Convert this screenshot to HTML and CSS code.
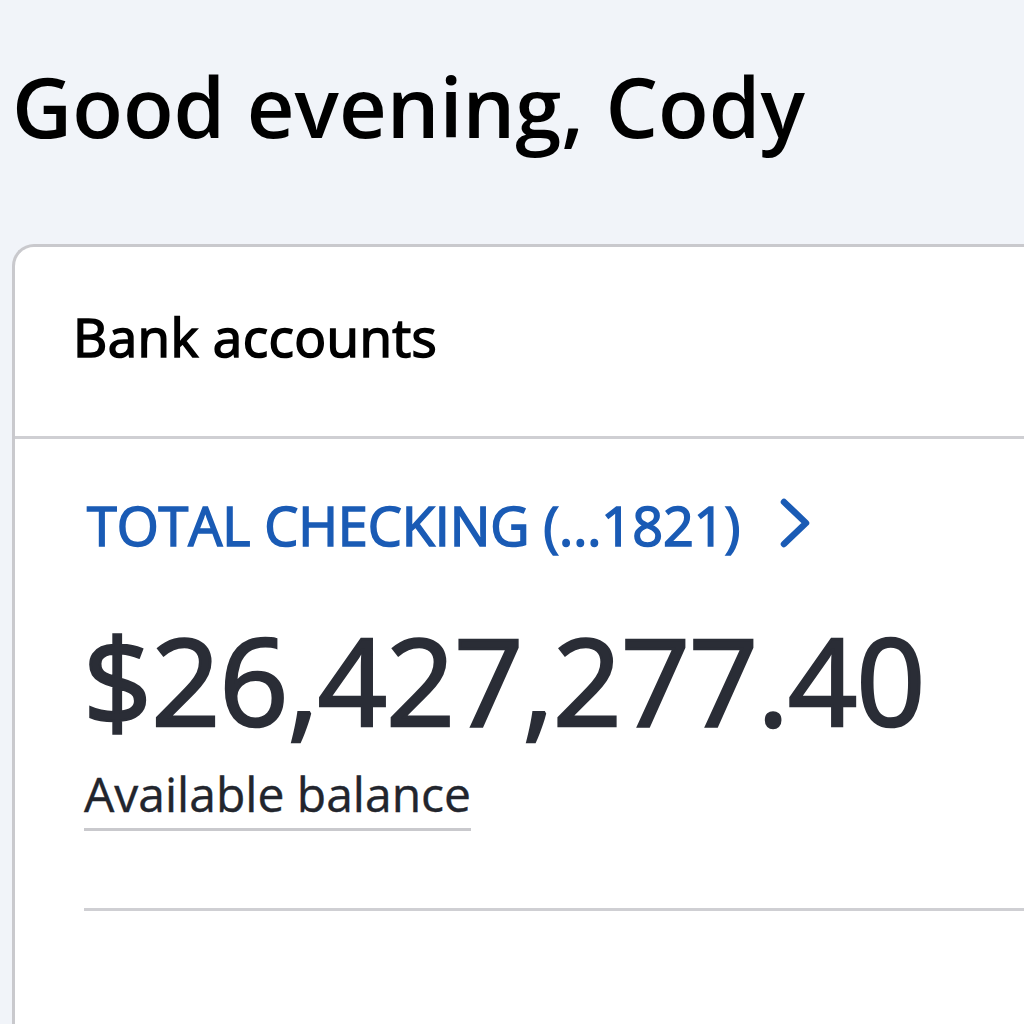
FILE: index.html
```html
<!DOCTYPE html>
<html lang="en">
<head>
<meta charset="utf-8">
<title>Accounts</title>
<link rel="stylesheet" href="styles.css">
</head>
<body>
<main class="page">
  <h1 class="greeting">Good evening, Cody</h1>
  <section class="card">
    <header class="card-head">
      <h2 class="card-title">Bank accounts</h2>
    </header>
    <div class="account">
      <a class="account-link" href="#">
        <span class="account-name">TOTAL CHECKING (...1821)</span>
        <svg class="chevron" viewBox="0 0 34 52" width="34" height="52" aria-hidden="true">
          <path d="M6 5 L28 26 L6 47" fill="none" stroke="#1a5bb5" stroke-width="6.5" stroke-linecap="round" stroke-linejoin="round"/>
        </svg>
      </a>
      <div class="balance">$26,427,277.40</div>
      <div class="balance-label"><span class="dotted">Available balance</span></div>
      <div class="account-divider"></div>
    </div>
  </section>
</main>
</body>
</html>
```
FILE: styles.css
```css
html, body {
  margin: 0;
  padding: 0;
}
body {
  background: #f1f4f9;
  font-family: "Open Sans", "Noto Sans", sans-serif;
  overflow: hidden;
  height: 1024px;
}
.page {
  padding: 50px 0 0 12px;
}
.greeting {
  margin: 0;
  font-size: 83px;
  font-weight: 600;
  line-height: 112px;
  color: #000;
}
.card {
  margin-top: 82px;
  background: #fff;
  border: 3px solid #c9c9cd;
  border-right: none;
  border-bottom: none;
  border-top-left-radius: 22px;
  height: 800px;
}
.card-head {
  height: 179px;
  padding-bottom: 10px;
  border-bottom: 3px solid #cfcfd3;
  display: flex;
  align-items: center;
  padding-left: 58px;
}
.card-title {
  margin: 0;
  font-size: 53px;
  font-weight: 400;
  color: #000;
  line-height: 1;
  letter-spacing: 0.4px;
  -webkit-text-stroke: 1.6px #000;
}
.account {
  padding: 46px 0 0 72px;
}
.account-link {
  display: flex;
  align-items: center;
  gap: 38px;
  text-decoration: none;
  color: #1a5bb5;
}
.account-name {
  font-size: 54px;
  font-weight: 400;
  line-height: 80px;
  letter-spacing: -0.1px;
  -webkit-text-stroke: 1.6px #1a5bb5;
}
.chevron {
  display: block;
  margin-top: -4px;
}
.balance {
  margin: 39px 0 0 -4px;
  font-size: 121px;
  font-weight: 400;
  color: #2a2d36;
  line-height: 150px;
  letter-spacing: -1px;
  -webkit-text-stroke: 2.6px #2a2d36;
}
.balance-label {
  margin: 10px 0 0 -3px;
}
.dotted {
  display: inline-block;
  font-size: 48px;
  font-weight: 400;
  color: #22252d;
  line-height: 60px;
  border-bottom: 3px solid #c9c9cd;
  padding-bottom: 4px;
  -webkit-text-stroke: 0.4px #22252d;
}
.account-divider {
  margin: 77px 0 0 -3px;
  height: 3px;
  background: #cfcfd3;
}
```
